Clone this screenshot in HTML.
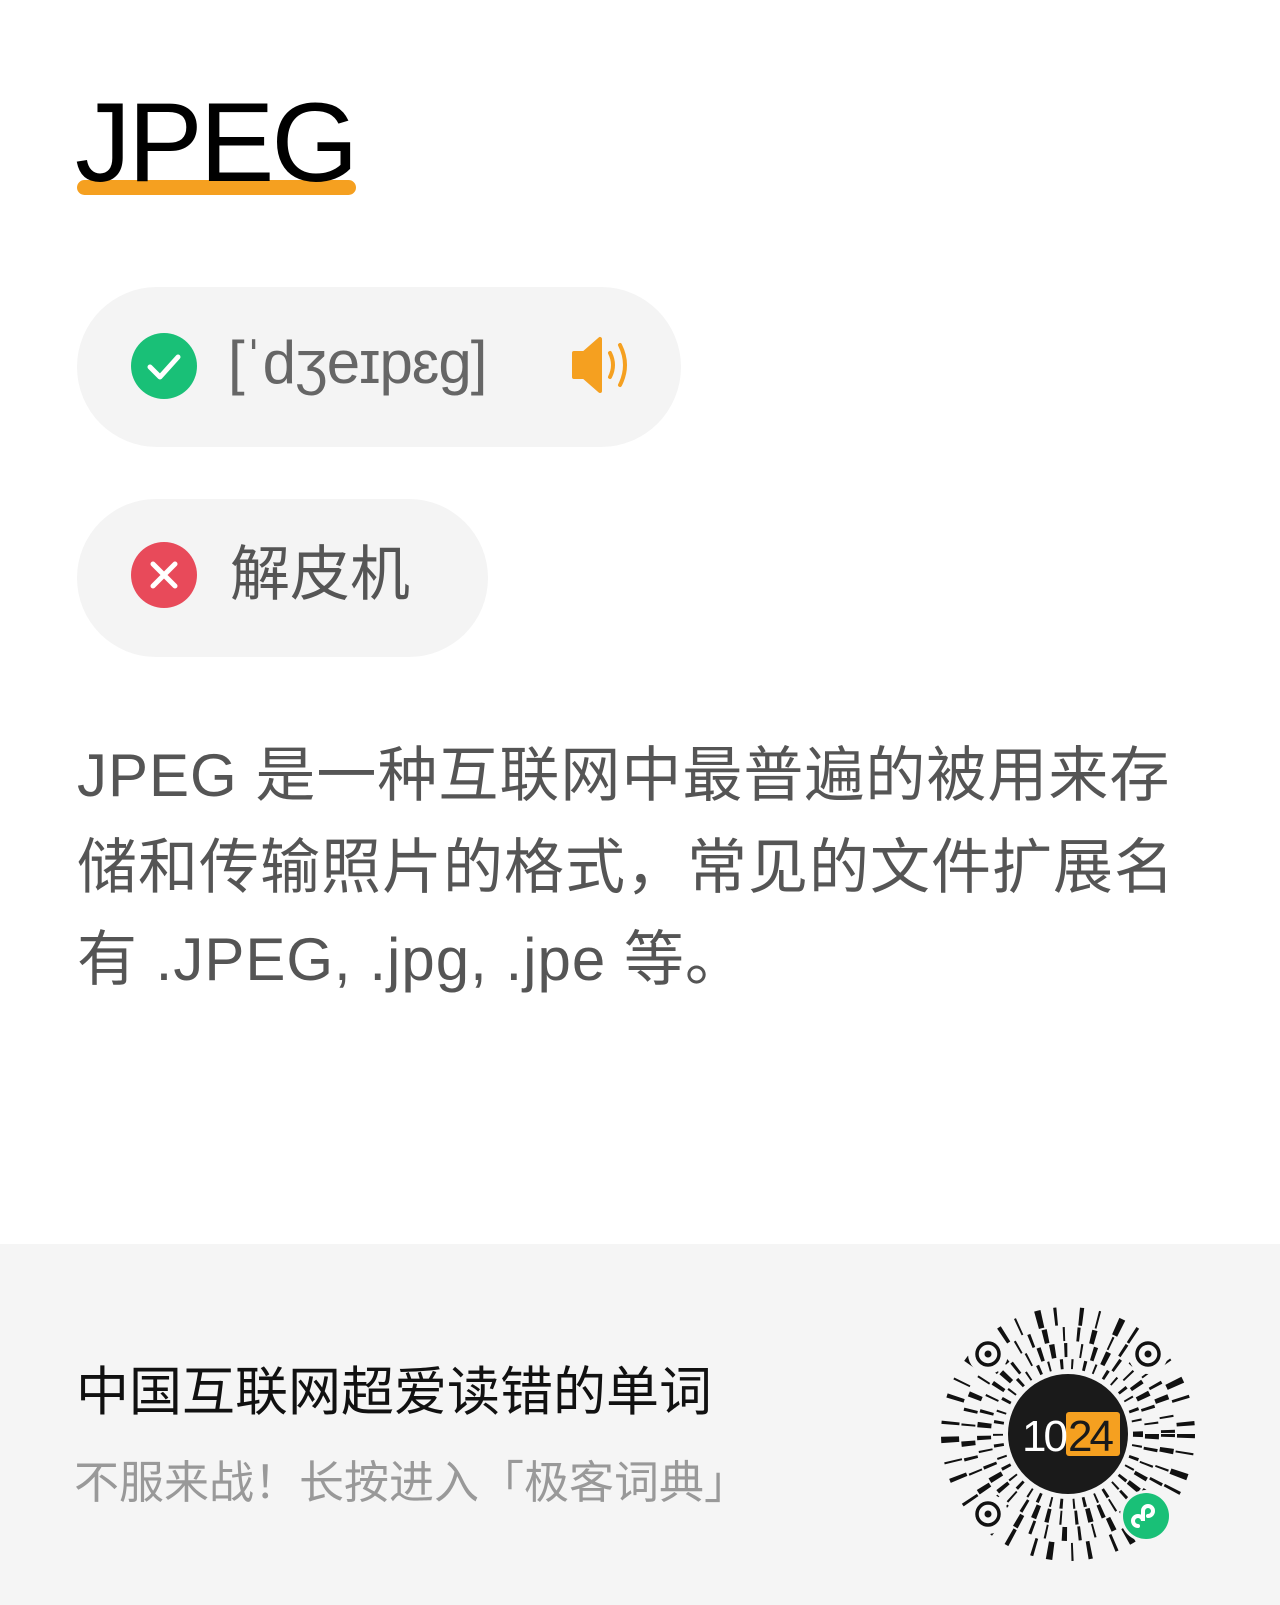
<!DOCTYPE html>
<html><head><meta charset="utf-8">
<style>
html,body{margin:0;padding:0}
body{width:1280px;height:1605px;background:#fff;position:relative;overflow:hidden;font-family:"Liberation Sans","Noto Sans CJK SC",sans-serif}
.abs{position:absolute}
.title{left:75px;top:78px;font-size:112px;color:#000;line-height:130px;letter-spacing:-3px;z-index:2}
.ul{left:77px;top:180px;width:279px;height:15px;border-radius:8px;background:#f5a020;z-index:1}
.pill{background:#f4f4f4;border-radius:80px}
.ph{font-size:60px;color:#666;line-height:70px}
.para{left:77px;top:730px;width:1250px;font-size:60px;letter-spacing:1px;line-height:92px;color:#555;white-space:nowrap}
.footer{left:0;top:1244px;width:1280px;height:361px;background:#f5f5f5}
</style></head><body>
<div class="abs ul"></div>
<div class="abs title">JPEG</div>

<div class="abs pill" style="left:77px;top:287px;width:604px;height:160px"></div>
<svg class="abs" style="left:131px;top:333px" width="66" height="66" viewBox="0 0 66 66"><circle cx="33" cy="33" r="33" fill="#19c077"/><path d="M19 34 L29 44 L47 24" stroke="#fff" stroke-width="5" fill="none" stroke-linecap="round" stroke-linejoin="round"/></svg>
<div class="abs ph" style="left:228px;top:328px;letter-spacing:-1px">[ˈdʒeɪpɛg]</div>
<svg class="abs" style="left:570px;top:335px" width="70" height="60" viewBox="0 0 70 60"><path d="M4 18 H14 L30 4 V56 L14 42 H4 Z" fill="#f5a020" stroke="#f5a020" stroke-width="4" stroke-linejoin="round"/><path d="M40 18 Q46 30 40 42" stroke="#f5a020" stroke-width="4" fill="none" stroke-linecap="round"/><path d="M50 10 Q60 30 50 50" stroke="#f5a020" stroke-width="4" fill="none" stroke-linecap="round"/></svg>

<div class="abs pill" style="left:77px;top:499px;width:411px;height:158px"></div>
<svg class="abs" style="left:131px;top:542px" width="66" height="66" viewBox="0 0 66 66"><circle cx="33" cy="33" r="33" fill="#e84a5a"/><path d="M22 22 L44 44 M44 22 L22 44" stroke="#fff" stroke-width="5" stroke-linecap="round"/></svg>
<div class="abs ph" style="left:230px;top:540px;color:#555">解皮机</div>

<div class="abs para">JPEG 是一种互联网中最普遍的被用来存<br>储和传输照片的格式，常见的文件扩展名<br>有 .JPEG, .jpg, .jpe 等。</div>

<div class="abs footer"></div>
<div class="abs" style="left:76px;top:1360px;font-size:53px;color:#111;line-height:66px">中国互联网超爱读错的单词</div>
<div class="abs" style="left:74px;top:1455px;font-size:45px;color:#999;line-height:56px">不服来战！长按进入「极客词典」</div>

<svg class="abs" style="left:938px;top:1304px" width="260" height="260" viewBox="0 0 260 260">
<g fill="none" stroke="#111" stroke-linecap="butt">
<circle cx="130" cy="130" r="118" stroke-width="18" stroke-dasharray="4 14 2 18 6 12 3 22"/>
<circle cx="130" cy="130" r="100" stroke-width="14" stroke-dasharray="3 11 5 15 2 12"/>
<circle cx="130" cy="130" r="84" stroke-width="14" stroke-dasharray="5 9 3 13 2 10 4 8"/>
<circle cx="130" cy="130" r="70" stroke-width="10" stroke-dasharray="3 8 2 10"/>
</g>
<g fill="#f5f5f5"><circle cx="50" cy="50" r="20"/><circle cx="210" cy="50" r="20"/><circle cx="50" cy="210" r="20"/></g>
<g fill="none" stroke="#111" stroke-width="3.5"><circle cx="50" cy="50" r="11"/><circle cx="210" cy="50" r="11"/><circle cx="50" cy="210" r="11"/></g>
<g fill="#111"><circle cx="50" cy="50" r="3.5"/><circle cx="210" cy="50" r="3.5"/><circle cx="50" cy="210" r="3.5"/></g>
<circle cx="130" cy="130" r="60" fill="#1a1a1a"/>
<rect x="128" y="108" width="54" height="44" fill="#f5a020" rx="3"/>
<text x="84" y="147" font-family="Liberation Sans" font-size="44" fill="#fff" letter-spacing="-3">10</text>
<text x="130" y="147" font-family="Liberation Sans" font-size="44" fill="#1a1a1a" letter-spacing="-3">24</text>
<circle cx="208" cy="212" r="26" fill="#f5f5f5"/>
<circle cx="208" cy="212" r="23" fill="#19c077"/>
<path d="M200 222 a5 5 0 1 1 5 -5 v-10 a5 5 0 1 1 5 5" stroke="#fff" stroke-width="4" fill="none" stroke-linecap="round"/>
</svg>
</body></html>
